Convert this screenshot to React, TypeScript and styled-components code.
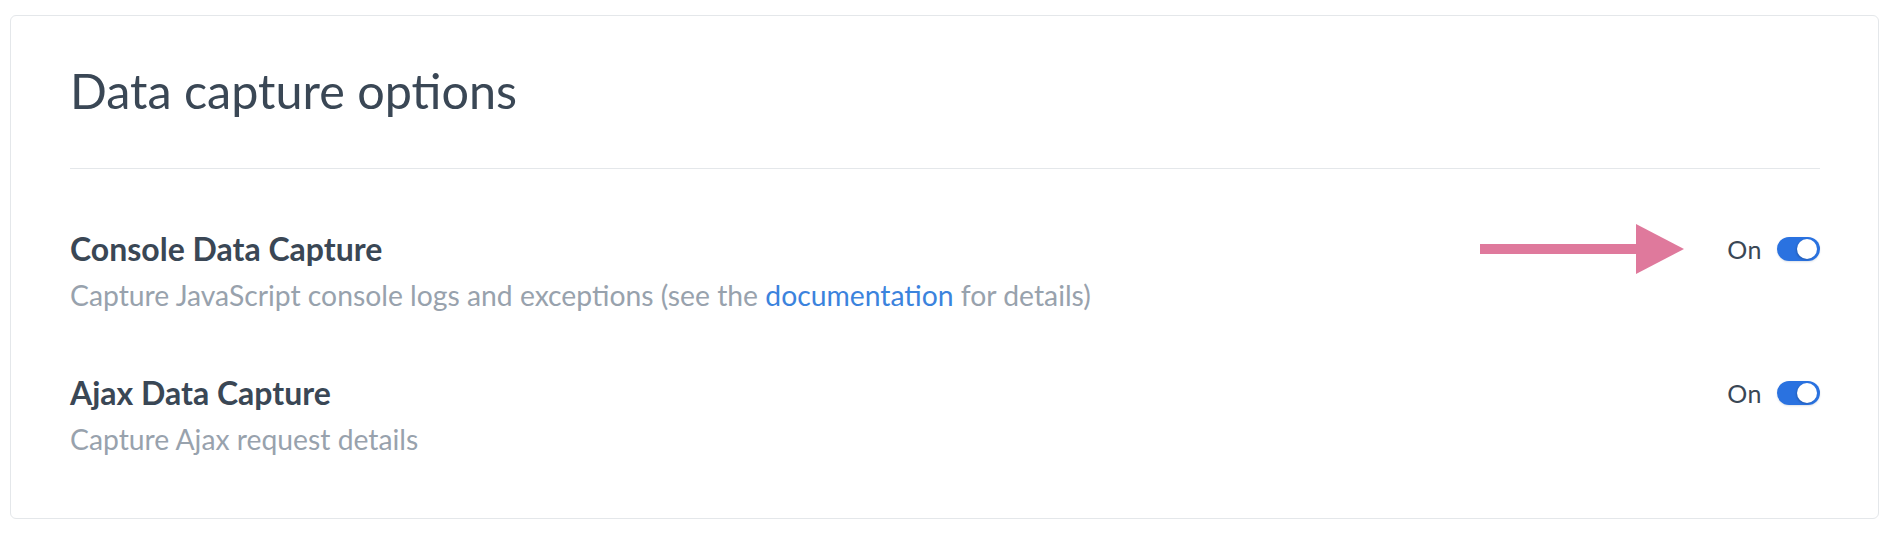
import styled, { createGlobalStyle } from "styled-components"

const GlobalStyle = createGlobalStyle`
  html, body {
    margin: 0;
    padding: 0;
    background: #ffffff;
  }
  body {
    font-family: Lato, "Noto Sans", sans-serif;
    -webkit-font-smoothing: antialiased;
  }
`

type Option = {
  title: string
  description: React.ReactNode
  enabled: boolean
  highlighted?: boolean
}

const getOptions = (): Option[] => [
  {
    title: 'Console Data Capture',
    description: (
      <>
        Capture JavaScript console logs and exceptions (see the{' '}
        <DocLink href="#">documentation</DocLink> for details)
      </>
    ),
    enabled: true,
    highlighted: true,
  },
  {
    title: 'Ajax Data Capture',
    description: 'Capture Ajax request details',
    enabled: true,
  },
]

const PointerArrow = () => (
  <ArrowSvg width="204" height="50" viewBox="0 0 204 50" aria-hidden>
    <rect x="0" y="20" width="158" height="10" fill="#df799c" />
    <polygon points="156,0 204,25 156,50" fill="#df799c" />
  </ArrowSvg>
)

type ToggleProps = { on: boolean }
const Toggle = ({ on }: ToggleProps) => (
  <Control>
    <StateLabel>{on ? 'On' : 'Off'}</StateLabel>
    <Track $on={on}>
      <Knob $on={on} />
    </Track>
  </Control>
)

export default function App() {
  const options = getOptions()
  return (
    <>
      <GlobalStyle />
      <Page>
        <Card>
          <Header>
            <Title>Data capture options</Title>
          </Header>
          <List>
            {options.map((option) => (
              <Row key={option.title}>
                <RowHead>
                  <RowTitle>{option.title}</RowTitle>
                  <ControlSlot>
                    {option.highlighted && <PointerArrow />}
                    <Toggle on={option.enabled} />
                  </ControlSlot>
                </RowHead>
                <RowDescription>{option.description}</RowDescription>
              </Row>
            ))}
          </List>
        </Card>
      </Page>
    </>
  )
}

const Page = styled.div`
  padding: 15px 19px 15px 10px;
`

const Card = styled.section`
  border: 1px solid #e4e7ea;
  border-radius: 6px;
  padding: 0 58px 0 59px;
  background: #fff;
`

const Header = styled.header`
  padding: 47px 0 51px;
  border-bottom: 1px solid #e4e7ea;
`

const Title = styled.h1`
  margin: 0;
  font-size: 48.5px;
  line-height: 54px;
  font-weight: 400;
  color: #3a4755;
`

const List = styled.div`
  display: flex;
  flex-direction: column;
  padding-bottom: 61px;
`

const Row = styled.div`
  padding-top: 62px;
`

const RowHead = styled.div`
  display: flex;
  align-items: center;
  justify-content: space-between;
`

const RowTitle = styled.h2`
  margin: 0;
  font-size: 32px;
  line-height: 36px;
  font-weight: 700;
  color: #3a4755;
`

const RowDescription = styled.p`
  margin: 10px 0 0;
  font-size: 28.3px;
  line-height: 36px;
  color: #98a2ad;
`

const DocLink = styled.a`
  color: #3b83dd;
  text-decoration: none;
`

const ControlSlot = styled.div`
  position: relative;
  display: flex;
  align-items: center;
`

const ArrowSvg = styled.svg`
  position: absolute;
  right: calc(100% + 43px);
  top: 50%;
  transform: translateY(-50%);
`

const Control = styled.div`
  display: flex;
  align-items: center;
  gap: 15px;
`

const StateLabel = styled.span`
  font-size: 25px;
  line-height: 24px;
  color: #3a4755;
  letter-spacing: 0.5px;
`

const Track = styled.span<{ $on: boolean }>`
  position: relative;
  display: block;
  width: 43px;
  height: 24px;
  border-radius: 12px;
  background: ${(p) => (p.$on ? '#2a72e0' : '#c9d0d8')};
  box-shadow: 0 1px 2px rgba(30, 60, 110, 0.15);
`

const Knob = styled.span<{ $on: boolean }>`
  position: absolute;
  top: 2px;
  left: ${(p) => (p.$on ? '20px' : '3px')};
  width: 20px;
  height: 20px;
  border-radius: 50%;
  background: #fff;
  box-shadow: -1px 1px 2px rgba(0, 0, 0, 0.18);
`
